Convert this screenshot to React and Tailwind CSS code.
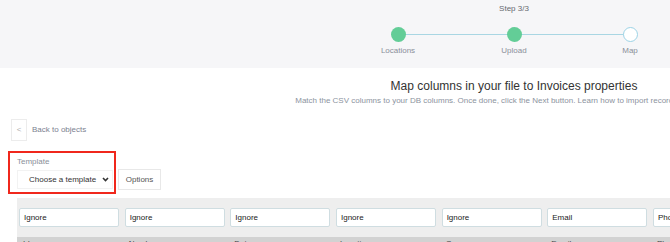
import React from "react";

const steps = [
  { label: "Locations", done: true },
  { label: "Upload", done: true },
  { label: "Map", done: false },
];

const cols = [
  { value: "Ignore", head: "Id" },
  { value: "Ignore", head: "Number" },
  { value: "Ignore", head: "Date" },
  { value: "Ignore", head: "Location" },
  { value: "Ignore", head: "Company" },
  { value: "Email", head: "Email" },
  { value: "Phone", head: "Phone" },
  { value: "Ignore", head: "Notes" },
];

export default function App() {
  return (
    <div className="w-[670px] h-[242px] overflow-hidden bg-white font-['Liberation_Sans',Arial,sans-serif]">
      <div className="w-[1028px]">
        {/* Stepper band */}
        <div className="h-[68px] bg-[#f6f6f8] flex flex-col items-center pt-[4px]">
          <div className="text-[8px] leading-[10px] text-[#666a70]">Step 3/3</div>
          <div className="relative w-[292px] mt-[13px] flex justify-between">
            <div className="absolute left-[30px] right-[30px] top-[7px] h-px bg-[#a9d6e3]" />
            {steps.map((s) => (
              <div key={s.label} className="relative z-10 w-[60px] flex flex-col items-center">
                <div
                  className={
                    s.done
                      ? "w-[15px] h-[15px] rounded-full bg-[#63cd97]"
                      : "w-[15px] h-[15px] rounded-full bg-white border border-[#9dd3e6]"
                  }
                />
                <div className="mt-[4px] text-[8px] leading-[10px] text-[#8a8f99]">{s.label}</div>
              </div>
            ))}
          </div>
        </div>

        {/* Heading */}
        <div className="mt-[11px] text-center text-[12px] leading-[14px] text-[#333]">
          Map columns in your file to Invoices properties
        </div>
        <div className="mt-[3px] text-center text-[8px] leading-[10px] text-[#8c939e] whitespace-nowrap">
          Match the CSV columns to your DB columns. Once done, click the Next button. Learn how to import records from CSV files.
        </div>

        {/* Back */}
        <div className="mt-[13px] ml-[11px] flex items-center">
          <div className="w-[16px] h-[22px] border border-[#ececec] flex items-center justify-center text-[8px] text-[#b0b0b0]">
            &lt;
          </div>
          <div className="ml-[5px] text-[8px] leading-[10px] text-[#7b8190]">Back to objects</div>
        </div>

        {/* Template */}
        <div className="relative mt-[10px] pl-[17px] pt-[6px]">
          <div className="absolute left-[8px] top-0 w-[108px] h-[43px] border-2 border-[#f0271c] pointer-events-none" />
          <div className="text-[8px] leading-[10px] text-[#8a8f99]">Template</div>
          <div className="mt-[2px] flex items-center">
            <div className="w-[96px] h-[19px] bg-white border border-[#f2f2f2] flex items-center pl-[11px] pr-[3px] text-[8px] text-[#333]">
              <span className="flex-1">Choose a template</span>
              <svg width="7" height="5" viewBox="0 0 7 5">
                <path d="M1 1 L3.5 3.5 L6 1" fill="none" stroke="#333" strokeWidth="1.6" />
              </svg>
            </div>
            <div className="ml-[5px] w-[43px] h-[21px] bg-white border border-[#e8e8e8] flex items-center justify-center text-[8px] text-[#555]">
              Options
            </div>
          </div>
        </div>

        {/* Mapping table */}
        <div className="mt-[8px] ml-[17px] bg-[#eeeeee]">
          <div className="pt-[10px] pb-[10px] pl-[2px] flex gap-[5.67px]">
            {cols.map((c, i) => (
              <div
                key={i}
                className="w-[100px] h-[19px] shrink-0 bg-white border border-[#cfdde1] rounded-[2px] flex items-center pl-[4px] text-[8px] text-[#222]"
              >
                {c.value}
              </div>
            ))}
          </div>
          <div className="h-[20px] bg-[#d2d2d2] flex pl-[2px]">
            {cols.map((c, i) => (
              <div key={i} className="w-[105.67px] shrink-0 pl-[4px] pt-[2px] text-[8px] leading-[10px] text-[#444]">
                {c.head}
              </div>
            ))}
          </div>
        </div>
      </div>
    </div>
  );
}
